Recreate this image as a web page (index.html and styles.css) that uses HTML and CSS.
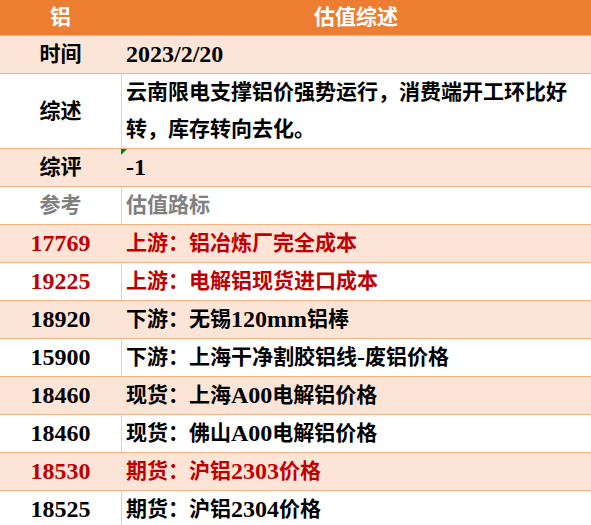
FILE: index.html
```html
<!DOCTYPE html>
<html lang="zh">
<head>
<meta charset="utf-8">
<link rel="stylesheet" href="styles.css">
</head>
<body>
<div class="sheet">
  <div class="row head"><div class="c1">铝</div><div class="c2 center">估值综述</div></div>
  <div class="row peach"><div class="c1">时间</div><div class="c2"><span class="n">2023/2/20</span></div></div>
  <div class="row white tall"><div class="c1">综述</div><div class="c2 wrap">云南限电支撑铝价强势运行，消费端开工环比好<br>转，库存转向去化。</div></div>
  <div class="row peach"><div class="c1">综评</div><div class="c2 flag"><span class="n">-1</span></div></div>
  <div class="row white gray"><div class="c1">参考</div><div class="c2">估值路标</div></div>
  <div class="row peach red"><div class="c1"><span class="n">17769</span></div><div class="c2">上游：铝冶炼厂完全成本</div></div>
  <div class="row white red"><div class="c1"><span class="n">19225</span></div><div class="c2">上游：电解铝现货进口成本</div></div>
  <div class="row peach"><div class="c1"><span class="n">18920</span></div><div class="c2">下游：无锡<span class="n">120mm</span>铝棒</div></div>
  <div class="row white"><div class="c1"><span class="n">15900</span></div><div class="c2">下游：上海干净割胶铝线<span class="n">-</span>废铝价格</div></div>
  <div class="row peach"><div class="c1"><span class="n">18460</span></div><div class="c2">现货：上海<span class="n">A00</span>电解铝价格</div></div>
  <div class="row white"><div class="c1"><span class="n">18460</span></div><div class="c2">现货：佛山<span class="n">A00</span>电解铝价格</div></div>
  <div class="row peach red"><div class="c1"><span class="n">18530</span></div><div class="c2">期货：沪铝<span class="n">2303</span>价格</div></div>
  <div class="row white"><div class="c1"><span class="n">18525</span></div><div class="c2">期货：沪铝<span class="n">2304</span>价格</div></div>
</div>
</body>
</html>
```
FILE: styles.css
```css
html, body {
  margin: 0;
  padding: 0;
  background: #ffffff;
}
.sheet {
  width: 591px;
  height: 525px;
  overflow: hidden;
  font-family: "Liberation Serif", "Noto Sans CJK SC", serif;
  font-weight: bold;
  font-size: 21px;
  color: #000000;
}
.row {
  display: grid;
  grid-template-columns: 121px 1fr;
  height: 37px;
  border-bottom: 1px solid #f4b183;
}
.row > div {
  display: flex;
  align-items: center;
  line-height: 37px;
  white-space: nowrap;
}
.c1 {
  justify-content: center;
}
.c2 {
  padding-left: 5px;
}
.c2.center {
  justify-content: center;
  padding-left: 0;
}
.head {
  height: 35px;
  background: #ed7d31;
  color: #ffffff;
}
.head > div {
  line-height: 35px;
}
.peach {
  background: #fce4d6;
}
.white {
  background: #ffffff;
}
.white .c1 {
  border-right: 1px solid #d4d4d4;
  margin-right: -1px;
}
.tall {
  height: 74px;
}
.wrap {
  white-space: normal;
}
.red {
  color: #c00000;
}
.gray {
  color: #808080;
}
.n {
  font-family: "Liberation Serif", serif;
  font-size: 24px;
}
.flag {
  position: relative;
}
.flag::before {
  content: "";
  position: absolute;
  left: 0;
  top: 0;
  border-top: 6px solid #008000;
  border-right: 6px solid transparent;
}
```
